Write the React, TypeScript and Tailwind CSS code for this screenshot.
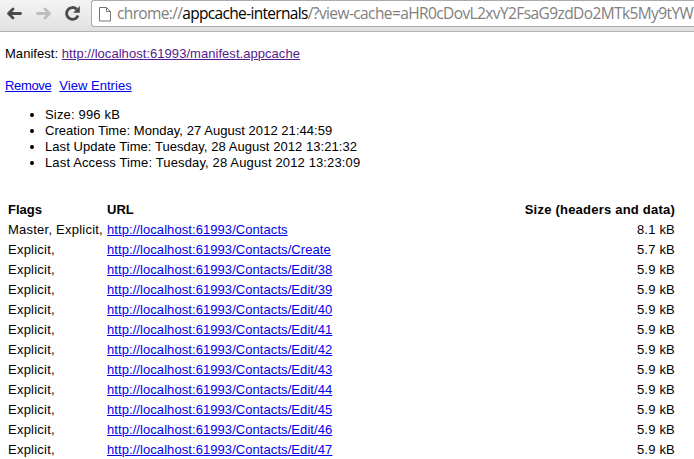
const entries = [
  { flags: 'Master, Explicit,', path: 'Contacts', size: '8.1 kB' },
  { flags: 'Explicit,', path: 'Contacts/Create', size: '5.7 kB' },
  ...[38, 39, 40, 41, 42, 43, 44, 45, 46, 47].map((id) => ({
    flags: 'Explicit,',
    path: `Contacts/Edit/${id}`,
    size: '5.9 kB',
  })),
];

const details = [
  { text: 'Size: 996 kB', tracking: 'tracking-[0.17px]' },
  { text: 'Creation Time: Monday, 27 August 2012 21:44:59', tracking: 'tracking-[0.045px]' },
  { text: 'Last Update Time: Tuesday, 28 August 2012 13:21:32', tracking: 'tracking-[0.06px]' },
  { text: 'Last Access Time: Tuesday, 28 August 2012 13:23:09', tracking: 'tracking-[0.14px]' },
];

const link = 'text-[#0000ee] underline decoration-1 underline-offset-1';

function Toolbar() {
  return (
    <header className="flex h-8 items-start border-b border-[#b2b2b6] bg-linear-to-b from-[#f4f4f4] to-[#e1e1e1]">
      <svg className="h-[30px] w-[90px] shrink-0" viewBox="0 0 90 30" fill="none">
        <path d="M20.500 13.500H8.800M13 9l-4.500 4.500L13 18" stroke="#4b4b4b" strokeWidth="2.8" strokeLinecap="round" strokeLinejoin="round" />
        <path d="M37.500 13.500H49.200M45 9l4.500 4.500L45 18" stroke="#bdbdbd" strokeWidth="2.8" strokeLinecap="round" strokeLinejoin="round" />
        <path d="M76.700 9.300A5.900 5.900 0 1 0 78 15.500" stroke="#4b4b4b" strokeWidth="2.8" />
        <path d="M79.800 6v6.700h-6.700z" fill="#4b4b4b" />
      </svg>
      <div className="ml-px flex h-[27px] min-w-0 flex-1 items-center rounded-l-[3px] border border-r-0 border-[#aaaaae] bg-white pl-[7px]">
        <svg className="h-4 w-3 shrink-0" viewBox="0 0 12 16" fill="none" stroke="#747474">
          <path d="M.5 1.500h7l4 4v9.500H.5zM7.500 1.500v4h4" />
        </svg>
        <p className="ml-[6px] flex whitespace-nowrap pb-px font-['Open_Sans','Noto_Sans',sans-serif] text-[15.5px] leading-[22px] text-[#808080]">
          <span className="tracking-[-0.64px]">chrome://</span>
          <span className="tracking-[-0.68px] text-black">appcache-internals</span>
          <span className="tracking-[-0.6px]">/?view-cache=aHR0cDovL2xvY2FsaG9zdDo2MTk5My9tYW</span>
        </p>
      </div>
    </header>
  );
}

export default function App() {
  return (
    <div className="h-[459px] w-[694px] overflow-hidden bg-white font-['Liberation_Sans',Arial,sans-serif] text-[13px] leading-4 text-black">
      <Toolbar />
      <main className="pt-[14px]">
        <p className="pl-[5px] tracking-[0.045px]">
          Manifest:{' '}
          <a className="text-[#551a8b] underline decoration-1 underline-offset-1">http://localhost:61993/manifest.appcache</a>
        </p>
        <nav className="mt-4 flex gap-2 pl-[5px]">
          <a className={`${link} tracking-[-0.35px]`}>Remove</a>
          <a className={`${link} tracking-[0.03px]`}>View Entries</a>
        </nav>
        <ul className="mt-[13px] list-disc pl-[45px]">
          {details.map((detail) => (
            <li key={detail.text} className={detail.tracking}>{detail.text}</li>
          ))}
        </ul>
        <table className="mt-[29px] ml-[7px] w-[668px] table-fixed border-collapse">
          <thead>
            <tr className="h-5 text-left">
              <th className="w-[99px] p-0 pl-px">Flags</th>
              <th className="p-0 pl-px">URL</th>
              <th className="w-[180px] p-0 text-right tracking-[0.22px]">Size (headers and data)</th>
            </tr>
          </thead>
          <tbody>
            {entries.map((entry) => (
              <tr key={entry.path} className="h-5 whitespace-nowrap">
                <td className="p-0 pl-px tracking-[0.23px]">{entry.flags}</td>
                <td className="p-0 pl-px tracking-[0.07px]">
                  <a className={link}>http://localhost:61993/{entry.path}</a>
                </td>
                <td className="p-0 text-right tracking-[0.2px]">{entry.size}</td>
              </tr>
            ))}
          </tbody>
        </table>
      </main>
    </div>
  );
}
